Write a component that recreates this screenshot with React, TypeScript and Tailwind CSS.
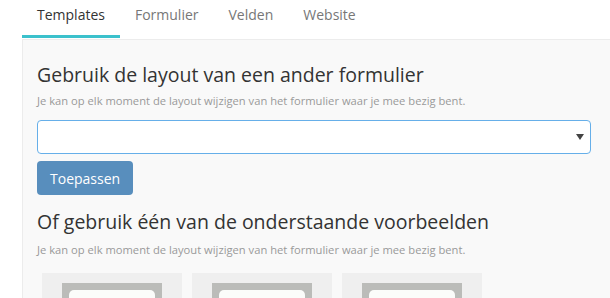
const tabs = ["Templates", "Formulier", "Velden", "Website"];

function TemplateCard() {
  return (
    <div className="w-[140px] h-[120px] shrink-0 bg-[#efefef] pt-[10px] px-[20px]">
      <div className="h-[100px] bg-[#bbbcb9] pt-[7px] px-[7px]">
        <div className="h-[90px] rounded-[5px] bg-[#fbfcfa]" />
      </div>
    </div>
  );
}

export default function App() {
  return (
    <div className="w-[610px] h-[298px] overflow-hidden bg-white font-['Open_Sans',sans-serif] pl-[22px]">
      <nav className="flex h-[39px]">
        {tabs.map((tab, i) => (
          <div
            key={tab}
            className={
              i === 0
                ? "px-[15px] pt-[5px] text-[14px] leading-[20px] text-[#333] border-b-[3px] border-[#3bc1cc] h-[38px]"
                : "px-[15px] pt-[5px] text-[14px] leading-[20px] text-[#777]"
            }
          >
            {tab}
          </div>
        ))}
      </nav>
      <div className="bg-[#f9f9f9] border-t border-l border-[#ececec] pl-[14px] pr-[19px] pt-[21px] h-[260px]">
        <h2 className="text-[19.5px] leading-[28px] text-[#333]">Gebruik de layout van een ander formulier</h2>
        <p className="mt-[4px] text-[11.2px] leading-[16px] text-[#999]">
          Je kan op elk moment de layout wijzigen van het formulier waar je mee bezig bent.
        </p>
        <div className="mt-[11px] h-[34px] bg-white border border-[#66afe9] rounded-[4px] flex items-center justify-end pr-[6px]">
          <svg width="8" height="6" viewBox="0 0 8 6">
            <path d="M0 0 H8 L4 6 Z" fill="#444" />
          </svg>
        </div>
        <button className="mt-[7px] h-[34px] px-[13px] bg-[#588ebd] rounded-[4px] text-white text-[14px]">
          Toepassen
        </button>
        <h2 className="mt-[13px] text-[19.5px] leading-[28px] text-[#333]">Of gebruik één van de onderstaande voorbeelden</h2>
        <p className="mt-[6px] text-[11.2px] leading-[16px] text-[#999]">
          Je kan op elk moment de layout wijzigen van het formulier waar je mee bezig bent.
        </p>
        <div className="mt-[15px] ml-[5px] flex gap-[10px]">
          <TemplateCard />
          <TemplateCard />
          <TemplateCard />
        </div>
      </div>
    </div>
  );
}
